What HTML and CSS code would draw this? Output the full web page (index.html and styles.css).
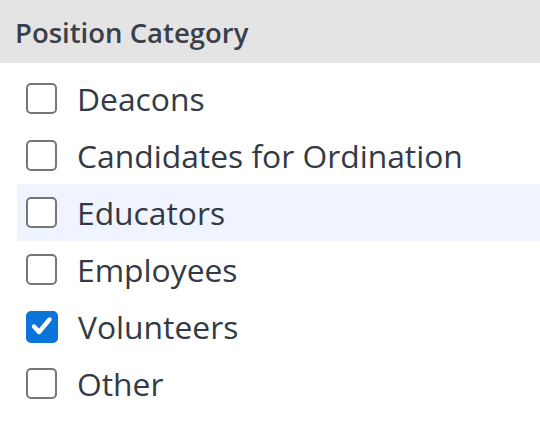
FILE: index.html
```html
<!DOCTYPE html>
<html lang="en">
<head>
	<meta charset="UTF-8">
	<title>Position Category</title>
	<link rel="stylesheet" href="styles.css">
</head>
<body>
	<div class="filter">
		<div class="filter-title">Position Category</div>
		<ul class="filter-list">
			<li class="filter-item"><span class="check"></span>Deacons</li>
			<li class="filter-item"><span class="check"></span>Candidates for Ordination</li>
			<li class="filter-item filter-item-hover"><span class="check"></span>Educators</li>
			<li class="filter-item"><span class="check"></span>Employees</li>
			<li class="filter-item"><span class="check check-on"><svg width="28" height="28" viewBox="0 0 28 28"><path d="M6 13.5l5 5.5L21.5 6.5" fill="none" stroke="#fff" stroke-width="4.4" stroke-linecap="round" stroke-linejoin="round"/></svg></span>Volunteers</li>
			<li class="filter-item"><span class="check"></span>Other</li>
		</ul>
	</div>
</body>
</html>
```

FILE: styles.css
```css
* {padding: 0; margin: 0;}
body {
	background: #fff;
	font-family: "Open Sans", "Liberation Sans", sans-serif;
	color: #333a45;
}
.filter-title {
	height: 63px;
	line-height: 66px;
	padding-left: 15px;
	background-color: #e4e4e4;
	font-size: 27.5px;
	font-weight: 600;
	color: #3a404a;
}
.filter-list {
	list-style: none;
	padding-top: 7px;
	padding-left: 17px;
}
.filter-item {
	display: flex;
	align-items: center;
	height: 57px;
	padding-left: 9px;
	font-size: 31.8px;
}
.filter-item-hover {
	background-color: #eff4fe;
}
.check {
	display: flex;
	align-items: center;
	justify-content: center;
	box-sizing: border-box;
	width: 31px;
	height: 31px;
	margin-right: 20px;
	border: 2px solid #767676;
	border-radius: 5px;
	background: #fff;
}
.check-on {
	width: 32px;
	height: 32px;
	border-color: #0a74da;
	background-color: #0a74da;
}
```
